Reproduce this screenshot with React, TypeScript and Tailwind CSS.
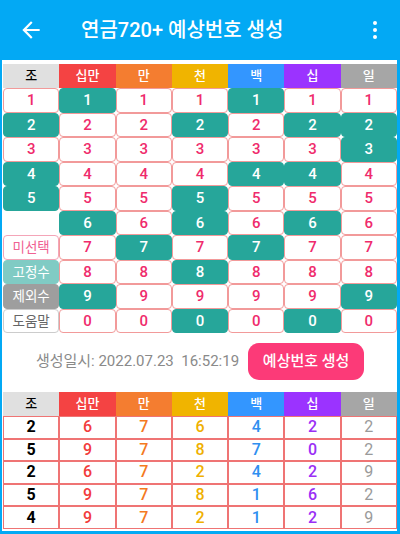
import React from "react";

const HEADERS = [
  { label: "조", bg: "bg-[#e0e0e0]", fg: "text-black" },
  { label: "십만", bg: "bg-[#f44343]", fg: "text-white" },
  { label: "만", bg: "bg-[#f47d30]", fg: "text-white" },
  { label: "천", bg: "bg-[#f0b400]", fg: "text-white" },
  { label: "백", bg: "bg-[#3396ff]", fg: "text-white" },
  { label: "십", bg: "bg-[#9b33ff]", fg: "text-white" },
  { label: "일", bg: "bg-[#a6a6a6]", fg: "text-white" },
];

const DIGITS = ["1", "2", "3", "4", "5", "6", "7", "8", "9", "0"];

// selected (teal) cells per column 십만..일, by row index
const SELECTED: number[][] = [
  [0, 5, 8],
  [6],
  [1, 4, 5, 7, 9],
  [0, 3, 6],
  [1, 3, 5, 9],
  [1, 2, 8],
];

const GROUP_SELECTED = [1, 3, 4];

const LABELS: Record<number, { text: string; cls: string }> = {
  6: { text: "미선택", cls: "bg-white text-[#f06292] border-[#f4a5b8]" },
  7: { text: "고정수", cls: "bg-[#80cbc4] text-white border-[#80cbc4]" },
  8: { text: "제외수", cls: "bg-[#9e9e9e] text-white border-[#9e9e9e]" },
  9: { text: "도움말", cls: "bg-white text-[#666] border-[#cccccc]" },
};

const RESULTS = [
  [2, 6, 7, 6, 4, 2, 2],
  [5, 9, 7, 8, 7, 0, 2],
  [2, 6, 7, 2, 4, 2, 9],
  [5, 9, 7, 8, 1, 6, 2],
  [4, 9, 7, 2, 1, 2, 9],
];

const RESULT_COLORS = [
  "text-black font-bold",
  "text-[#f23c3c] font-medium",
  "text-[#f47a1f] font-medium",
  "text-[#efb000] font-medium",
  "text-[#2f8ff0] font-medium",
  "text-[#9a2ff5] font-medium",
  "text-[#9a9a9a]",
];

function Cell({ value, on }: { value: string; on: boolean }) {
  return (
    <div
      className={
        on
          ? "flex h-[24.5px] items-center justify-center rounded-[4px] border border-[#26a69a] bg-[#26a69a] text-[15px] font-medium text-white"
          : "flex h-[24.5px] items-center justify-center rounded-[4px] border border-[#f29a9a] bg-white text-[15px] font-medium text-[#ef2b6c]"
      }
    >
      {value}
    </div>
  );
}

function HeaderRow({ height }: { height: string }) {
  return (
    <>
      {HEADERS.map((h) => (
        <div
          key={h.label}
          className={`flex ${height} items-center justify-center text-[13px] font-medium ${h.bg} ${h.fg}`}
        >
          {h.label}
        </div>
      ))}
    </>
  );
}

export default function App() {
  return (
    <div className="flex h-[534px] w-[400px] flex-col overflow-hidden bg-white font-['Roboto','Noto_Sans_CJK_KR',sans-serif]">
      <header className="flex h-[60px] shrink-0 items-center bg-[#03a9f4] text-white">
        <svg viewBox="0 0 24 24" className="ml-[18px] h-[26px] w-[26px]" fill="white">
          <path d="M20 11H7.83l5.59-5.59L12 4l-8 8 8 8 1.41-1.41L7.83 13H20v-2z" />
        </svg>
        <h1 className="ml-[37px] text-[20px] font-medium tracking-[0px]">연금720+ 예상번호 생성</h1>
        <svg viewBox="0 0 24 24" className="ml-auto mr-[13px] h-[24px] w-[24px]" fill="white">
          <circle cx="12" cy="5" r="2" />
          <circle cx="12" cy="12" r="2" />
          <circle cx="12" cy="19" r="2" />
        </svg>
      </header>

      <main className="flex flex-1 flex-col border-b-[3px] border-l-2 border-r-[3px] border-[#03a9f4] pl-px pt-[4px]">
        <div className="grid grid-cols-7">
          <HeaderRow height="h-[24px]" />
          {DIGITS.map((d, r) => (
            <React.Fragment key={d}>
              {r < 5 ? (
                <Cell value={String(r + 1)} on={GROUP_SELECTED.includes(r)} />
              ) : LABELS[r] ? (
                <div
                  className={`flex h-[24.5px] items-center justify-center rounded-[4px] border text-[13.5px] ${LABELS[r].cls}`}
                >
                  {LABELS[r].text}
                </div>
              ) : (
                <div className="h-[24.5px]" />
              )}
              {SELECTED.map((sel, c) => (
                <Cell key={c} value={d} on={sel.includes(r)} />
              ))}
            </React.Fragment>
          ))}
        </div>

        <div className="mt-[10px] flex items-center justify-center gap-[9px]">
          <span className="whitespace-pre text-[15px] text-[#8a8a8a]">생성일시: 2022.07.23  16:52:19</span>
          <button className="h-[37px] w-[116px] rounded-[11px] bg-[#fc3a78] text-[15px] font-medium text-white">
            예상번호 생성
          </button>
        </div>

        <div className="mt-[12px] grid grid-cols-7">
          <HeaderRow height="h-[24px]" />
          {RESULTS.map((row, r) =>
            row.map((v, c) => (
              <div
                key={`${r}-${c}`}
                className={`flex h-[22.6px] items-center justify-center border border-[#ef7474] text-[16px] ${RESULT_COLORS[c]}`}
              >
                {v}
              </div>
            ))
          )}
        </div>
      </main>
    </div>
  );
}
